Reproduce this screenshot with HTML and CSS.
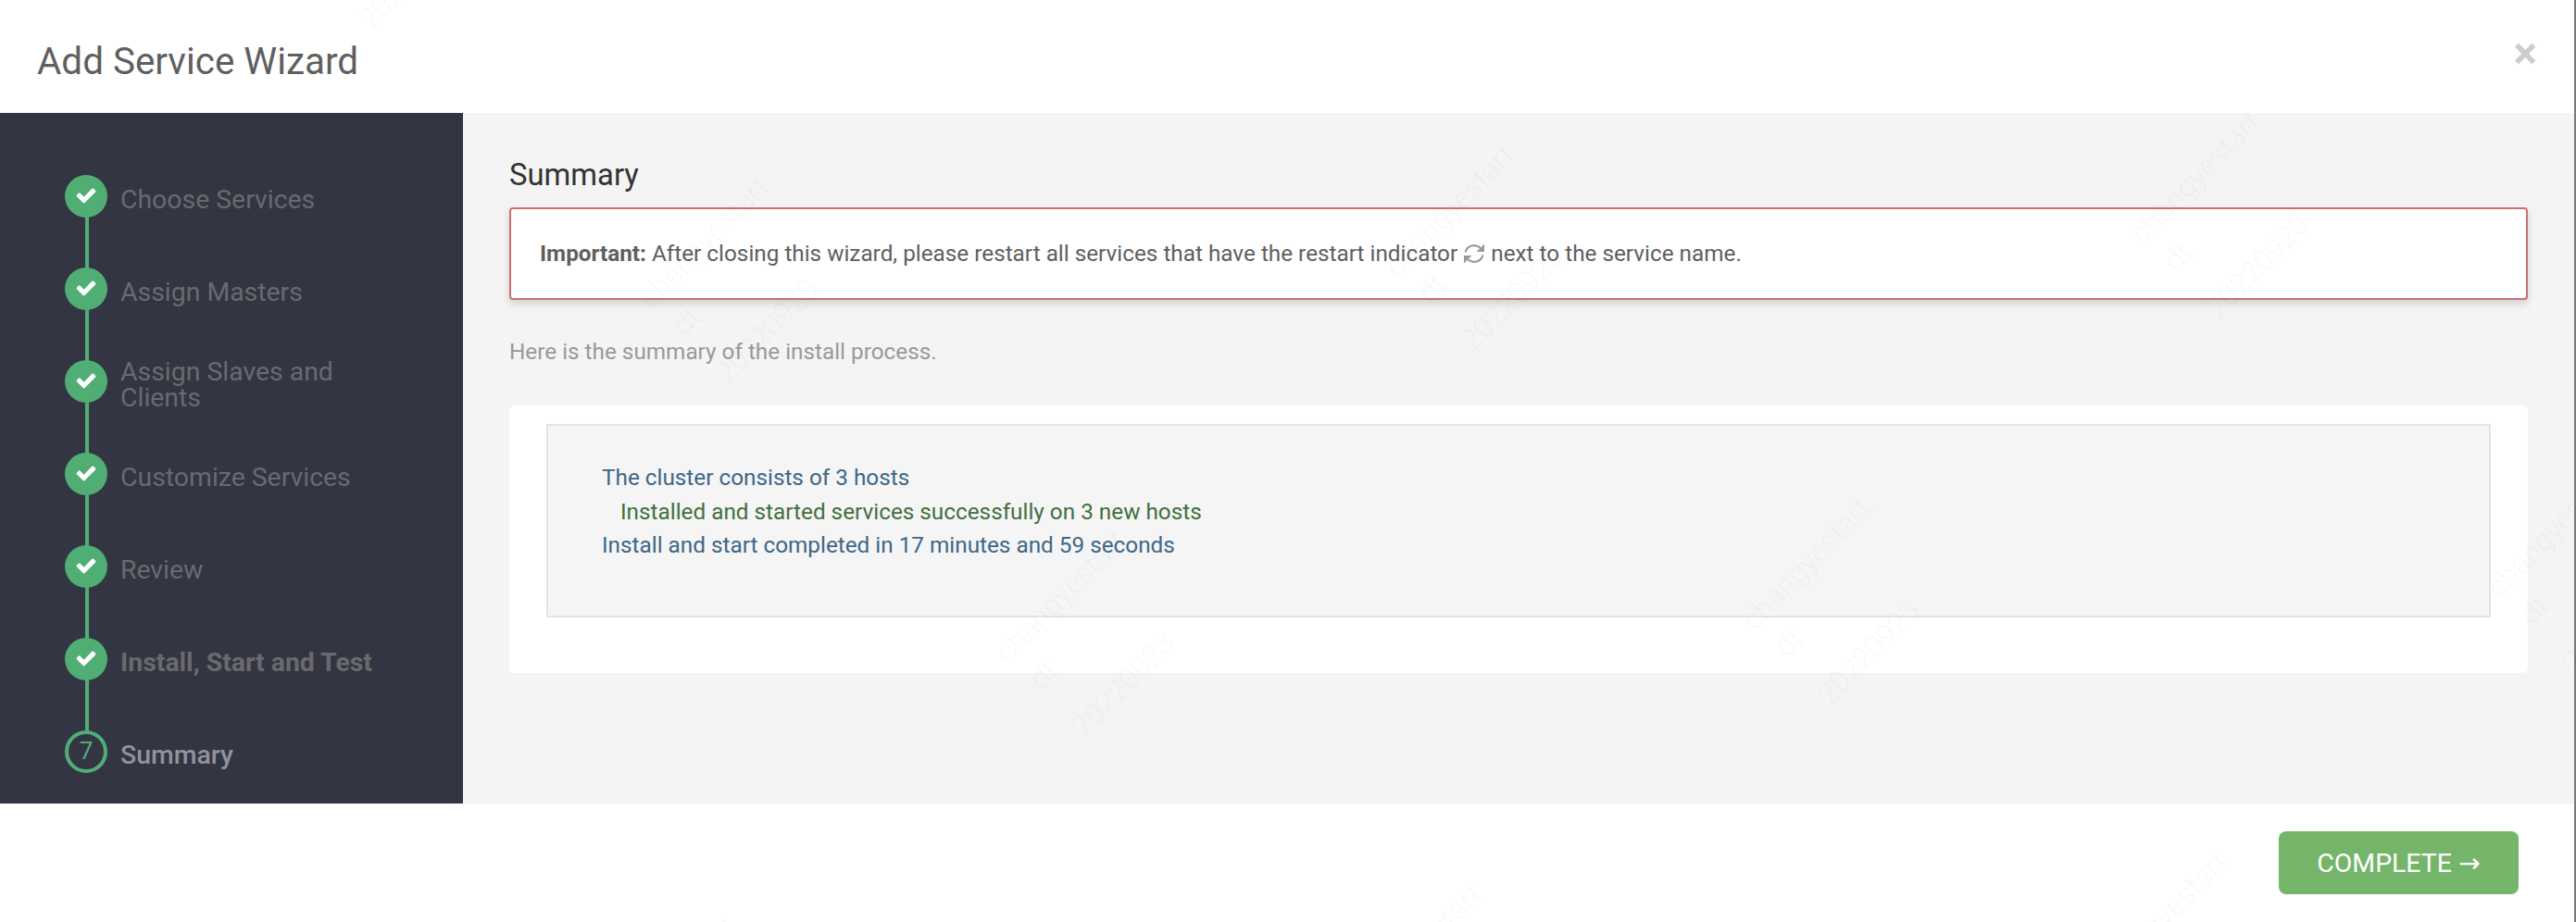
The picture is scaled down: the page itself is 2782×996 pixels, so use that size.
FILE: index.html
```html
<!DOCTYPE html>
<html lang="en">
<head>
<meta charset="utf-8">
<title>Add Service Wizard</title>
<link rel="stylesheet" href="styles.css">
</head>
<body>
<div class="modal">
  <header class="modal-header">
    <h1 class="modal-title">Add Service Wizard</h1>
    <button class="close" type="button">×</button>
  </header>
  <div class="modal-body">
    <nav class="sidebar">
      <ol class="steps">
        <li class="step done"><span class="bullet"><svg class="check" viewBox="0 0 1792 1792"><path d="M1671 566q0 40-28 68l-724 724-136 136q-28 28-68 28t-68-28l-136-136-362-362q-28-28-28-68t28-68l136-136q28-28 68-28t68 28l294 295 656-657q28-28 68-28t68 28l136 136q28 28 28 68z"/></svg></span><span class="label">Choose Services</span></li>
        <li class="step done"><span class="bullet"><svg class="check" viewBox="0 0 1792 1792"><path d="M1671 566q0 40-28 68l-724 724-136 136q-28 28-68 28t-68-28l-136-136-362-362q-28-28-28-68t28-68l136-136q28-28 68-28t68 28l294 295 656-657q28-28 68-28t68 28l136 136q28 28 28 68z"/></svg></span><span class="label">Assign Masters</span></li>
        <li class="step done"><span class="bullet"><svg class="check" viewBox="0 0 1792 1792"><path d="M1671 566q0 40-28 68l-724 724-136 136q-28 28-68 28t-68-28l-136-136-362-362q-28-28-28-68t28-68l136-136q28-28 68-28t68 28l294 295 656-657q28-28 68-28t68 28l136 136q28 28 28 68z"/></svg></span><span class="label">Assign Slaves and Clients</span></li>
        <li class="step done"><span class="bullet"><svg class="check" viewBox="0 0 1792 1792"><path d="M1671 566q0 40-28 68l-724 724-136 136q-28 28-68 28t-68-28l-136-136-362-362q-28-28-28-68t28-68l136-136q28-28 68-28t68 28l294 295 656-657q28-28 68-28t68 28l136 136q28 28 28 68z"/></svg></span><span class="label">Customize Services</span></li>
        <li class="step done"><span class="bullet"><svg class="check" viewBox="0 0 1792 1792"><path d="M1671 566q0 40-28 68l-724 724-136 136q-28 28-68 28t-68-28l-136-136-362-362q-28-28-28-68t28-68l136-136q28-28 68-28t68 28l294 295 656-657q28-28 68-28t68 28l136 136q28 28 28 68z"/></svg></span><span class="label">Review</span></li>
        <li class="step done bold"><span class="bullet"><svg class="check" viewBox="0 0 1792 1792"><path d="M1671 566q0 40-28 68l-724 724-136 136q-28 28-68 28t-68-28l-136-136-362-362q-28-28-28-68t28-68l136-136q28-28 68-28t68 28l294 295 656-657q28-28 68-28t68 28l136 136q28 28 28 68z"/></svg></span><span class="label">Install, Start and Test</span></li>
        <li class="step current"><span class="bullet">7</span><span class="label">Summary</span></li>
      </ol>
    </nav>
    <main class="content">
      <h2 class="content-title">Summary</h2>
      <div class="alert"><strong>Important:</strong> After closing this wizard, please restart all services that have the restart indicator <svg class="refresh" viewBox="0 0 24 24"><path d="M2.6 10.6A9.6 9.6 0 0 1 18.6 5.8"/><path d="M21.4 13.4A9.6 9.6 0 0 1 5.4 18.2"/><polygon points="23,1.500 23,10 14.500,10"/><polygon points="1,22.500 1,14 9.500,14"/></svg> next to the service name.</div>
      <p class="intro">Here is the summary of the install process.</p>
      <section class="card">
        <div class="well">
          <p class="line info">The cluster consists of 3 hosts</p>
          <p class="line success">Installed and started services successfully on 3 new hosts</p>
          <p class="line info">Install and start completed in 17 minutes and 59 seconds</p>
        </div>
      </section>
    </main>
  </div>
  <footer class="modal-footer">
    <button class="btn-complete" type="button">COMPLETE <span class="arrow">→</span></button>
  </footer>
  <svg class="watermarks" width="2782" height="996" viewBox="0 0 2782 996">
    <defs>
      <g id="wm" transform="translate(8 0) rotate(-45.5)">
        <text x="0" y="0">changyestart</text>
        <text x="4" y="46">dt</text>
        <text x="0" y="115">20220923</text>
      </g>
    </defs>
    <use href="#wm" transform="translate(311 -47)"/>
    <use href="#wm" transform="translate(1116 -82)"/>
    <use href="#wm" transform="translate(1921 -117)"/>
    <use href="#wm" transform="translate(-109 370)"/>
    <use href="#wm" transform="translate(696 335)"/>
    <use href="#wm" transform="translate(1501 300)"/>
    <use href="#wm" transform="translate(2306 265)"/>
    <use href="#wm" transform="translate(276 752)"/>
    <use href="#wm" transform="translate(1081 717)"/>
    <use href="#wm" transform="translate(1886 682)"/>
    <use href="#wm" transform="translate(2691 647)"/>
    <use href="#wm" transform="translate(661 1134)"/>
    <use href="#wm" transform="translate(1466 1099)"/>
    <use href="#wm" transform="translate(2271 1064)"/>
  </svg>
</div>
</body>
</html>
```
FILE: styles.css
```css
* { box-sizing: border-box; }
html, body { margin: 0; height: 100%; }
body { font-family: Roboto, "Liberation Sans", sans-serif; font-size: 24.3px; line-height: 36.4px; color: #606060; background: #fff; overflow: hidden; }
.modal { position: relative; display: flex; flex-direction: column; height: 996px; border-right: 2px solid #7a7a7a; background: #fff; }
.modal-header { flex: 0 0 122px; display: flex; justify-content: space-between; padding: 0 41px 0 40px; background: #fff; }
.modal-title { margin: 44px 0 0; font-size: 40.4px; line-height: 46px; font-weight: 400; color: #5f5f5f; }
.close { align-self: flex-start; margin: 34px -1px 0 0; padding: 0; border: 0; background: none; font-family: Roboto, sans-serif; font-size: 48px; line-height: 48px; font-weight: 700; color: #ccc; }
.modal-body { flex: 1; display: flex; min-height: 0; }
.sidebar { flex: 0 0 500px; background: #333543; padding: 40px 0 0 70px; }
.steps { list-style: none; margin: 0; padding: 0; }
.step { position: relative; display: flex; align-items: center; height: 100px; font-size: 28.4px; line-height: 28px; color: #6a6a6e; }
.step:not(:last-child)::after { content: ""; position: absolute; left: 22px; top: 72px; width: 4px; height: 56px; background: #50ae75; }
.bullet { flex: 0 0 46px; height: 46px; margin-right: 14px; display: flex; align-items: center; justify-content: center; border-radius: 50%; background: #50ae75; }
.check { width: 24px; height: 24px; fill: #fff; margin: -2px 0 0 -1px; }
.label { width: 310px; padding-top: 7px; }
.bold .label { font-weight: 700; }
.current .bullet { background: none; border: 4px solid #50ae75; color: #50ae75; font-size: 26px; font-weight: 400; padding-bottom: 3px; }
.current .label { color: #92929b; font-weight: 500; }
.content { flex: 1; min-width: 0; padding: 49px 50px 0; background: #f4f4f4; }
.content-title { margin: 0 0 17px; font-size: 32.8px; line-height: 36px; font-weight: 400; color: #333; }
.alert { height: 100px; display: flex; align-items: center; white-space: pre-wrap; padding: 0 31px; border: 2px solid #cc6f70; border-radius: 4px; background: #fff; box-shadow: 0 4px 8px rgba(0,0,0,.15); color: #606060; margin-bottom: 38px; }
.alert strong { font-weight: 700; }
.refresh { width: 24px; height: 24px; margin: 0; flex: none; }
.refresh path { fill: none; stroke: #999; stroke-width: 2.2; }
.refresh polygon { fill: #999; }
.intro { margin: 0 0 40px; color: #999; }
.card { padding: 20px 40px 60px; background: #fff; border-radius: 6px; }
.well { height: 209px; padding: 38px 58px 0; border: 2px solid #e3e3e3; background: #f5f5f5; }
.line { margin: 0; }
.info { color: #3d6787; }
.success { color: #41703e; padding-left: 20px; }
.modal-footer { flex: 0 0 128px; display: flex; justify-content: flex-end; padding: 30px 60px 0 0; background: #fff; }
.btn-complete { width: 259px; height: 68px; padding: 0; border: 0; border-radius: 8px; background: #75b56a; color: #fff; font-family: Roboto, sans-serif; font-size: 28.4px; font-weight: 400; }
.arrow { font-family: "DejaVu Sans", sans-serif; }
.watermarks { position: absolute; left: 0; top: 0; pointer-events: none; }
.watermarks text { font-family: Roboto, sans-serif; font-size: 32px; font-weight: 300; fill: #000; fill-opacity: .035; }
```
